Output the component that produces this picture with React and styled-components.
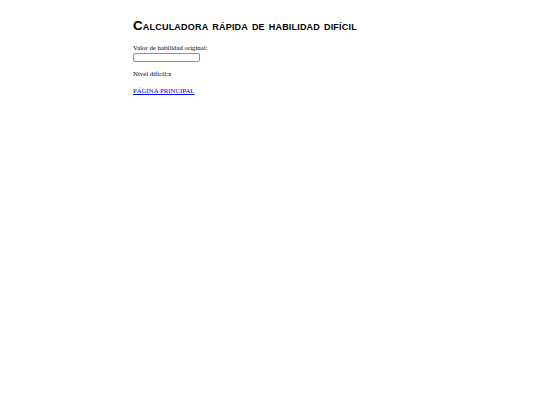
import styled, { createGlobalStyle } from "styled-components";

const GlobalStyle = createGlobalStyle`
  body {
    margin: 0;
    background: #ffffff;
    font-family: "Liberation Serif", "Times New Roman", serif;
    font-size: 6.8px;
    color: #000000;
  }
`;

const Page = styled.div`
  padding: 18px 0 0 133px;
`;

const Title = styled.h1`
  margin: 0 0 11px 0;
  font-family: "Liberation Sans", Arial, sans-serif;
  font-size: 13.4px;
  line-height: 15px;
  letter-spacing: 0.2px;
  font-weight: bold;
  font-variant: small-caps;
`;

const Field = styled.div`
  display: flex;
  flex-direction: column;
  align-items: flex-start;
  gap: 1px;
`;

const Label = styled.label`
  line-height: 8px;
`;

const Input = styled.input`
  box-sizing: border-box;
  width: 67px;
  height: 9px;
  margin: 0;
  padding: 0 2px;
  border: 1px solid #8f8f8f;
  border-radius: 2px;
  font-size: 7px;
  font-family: inherit;
`;

const Result = styled.p`
  margin: 8px 0 0 0;
  line-height: 8px;
`;

const Link = styled.a`
  display: inline-block;
  margin-top: 9px;
  line-height: 8px;
  color: #0000ee;
  text-decoration: underline;
`;

export default function App() {
  return (
    <>
      <GlobalStyle />
      <Page>
        <Title>Calculadora rápida de habilidad difícil</Title>
        <Field>
          <Label htmlFor="valor">Valor de habilidad original:</Label>
          <Input id="valor" type="text" />
        </Field>
        <Result>Nivel difícil:x</Result>
        <Link href="#">PÁGINA PRINCIPAL</Link>
      </Page>
    </>
  );
}
